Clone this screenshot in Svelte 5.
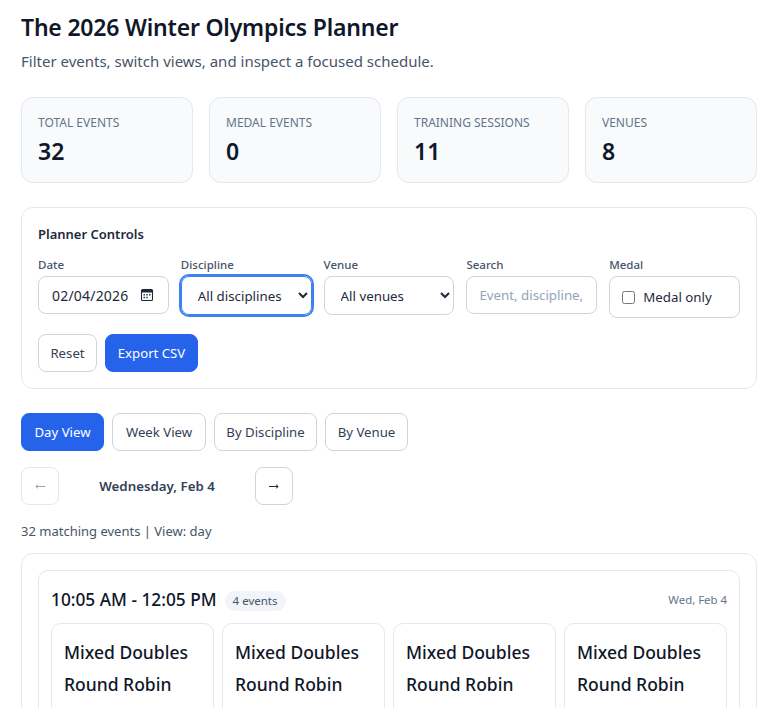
<script>
  const stats = [
    { label: "Total Events", value: 32 },
    { label: "Medal Events", value: 0 },
    { label: "Training Sessions", value: 11 },
    { label: "Venues", value: 8 },
  ];
  const views = ["Day View", "Week View", "By Discipline", "By Venue"];
  const cards = [1, 2, 3, 4];
</script>

<div class="page">
  <h1>The 2026 Winter Olympics Planner</h1>
  <p class="sub">Filter events, switch views, and inspect a focused schedule.</p>

  <div class="stats">
    {#each stats as stat}
      <div class="stat">
        <div class="stat-label">{stat.label}</div>
        <div class="stat-value">{stat.value}</div>
      </div>
    {/each}
  </div>

  <section class="controls">
    <h2>Planner Controls</h2>
    <div class="fields">
      <div class="field">
        <span class="label">Date</span>
        <div class="box date">
          <span>02/04/2026</span>
          <svg width="14" height="14" viewBox="0 0 14 14">
            <path d="M2.500 1.500h9A1 1 0 0 1 12.500 2.500v9a1 1 0 0 1-1 1h-9a1 1 0 0 1-1-1v-9a1 1 0 0 1 1-1z" fill="none" stroke="#1e293b" stroke-width="1.100"/>
            <path d="M1.500 2h11v2.500h-11z" fill="#1e293b"/>
            <path d="M3.500 6h1.400v1.400H3.500zM6.300 6h1.400v1.400H6.300zM9.100 6h1.400v1.400H9.100zM3.500 8.800h1.400v1.400H3.500zM6.300 8.800h1.400v1.400H6.300z" fill="#1e293b"/>
          </svg>
        </div>
      </div>
      <div class="field">
        <span class="label">Discipline</span>
        <select class="box select focused">
          <option>All disciplines</option>
        </select>
      </div>
      <div class="field">
        <span class="label">Venue</span>
        <select class="box select">
          <option>All venues</option>
        </select>
      </div>
      <div class="field">
        <span class="label">Search</span>
        <input class="box search" type="text" placeholder="Event, discipline, venue" />
      </div>
      <div class="field">
        <span class="label">Medal</span>
        <label class="box medal">
          <input type="checkbox" />
          <span>Medal only</span>
        </label>
      </div>
    </div>
    <div class="actions">
      <button class="btn">Reset</button>
      <button class="btn primary">Export CSV</button>
    </div>
  </section>

  <div class="tabs">
    {#each views as view, i}
      <button class="btn" class:primary={i === 0}>{view}</button>
    {/each}
  </div>

  <div class="nav">
    <button class="btn arrow" disabled aria-label="Previous day">
      <svg width="10" height="5" viewBox="0 0 10 5"><path d="M10 2.500H1M3 .7 .8 2.500 3 4.300" fill="none" stroke="currentColor"/></svg>
    </button>
    <div class="nav-label">Wednesday, Feb 4</div>
    <button class="btn arrow" aria-label="Next day">
      <svg width="10" height="5" viewBox="0 0 10 5"><path d="M0 2.500h9M7 .7 9.200 2.500 7 4.300" fill="none" stroke="currentColor"/></svg>
    </button>
  </div>

  <p class="summary">32 matching events | View: day</p>

  <section class="schedule">
    <div class="slot">
      <div class="slot-head">
        <div class="slot-title">
          <h3>10:05 AM - 12:05 PM</h3>
          <span class="pill">4 events</span>
        </div>
        <span class="slot-date">Wed, Feb 4</span>
      </div>
      <div class="cards">
        {#each cards as card}
          <div class="card">
            <div class="card-title">Mixed Doubles Round Robin</div>
          </div>
        {/each}
      </div>
    </div>
  </section>
</div>

<style>
  :global(body) {
    background: #fff;
    font-family: "Noto Sans", "Open Sans", sans-serif;
    color: #0f172a;
  }

  .page {
    padding: 0 17px 20px 21px;
  }

  h1 {
    margin: 0;
    padding-top: 12px;
    font-size: 23px;
    letter-spacing: -0.2px;
    line-height: 30px;
    font-weight: 600;
    color: #0f172a;
  }

  .sub {
    margin: 8px 0 0;
    font-size: 15px;
    line-height: 22px;
    color: #475569;
  }

  .stats {
    display: grid;
    grid-template-columns: repeat(4, 1fr);
    gap: 16px;
    margin-top: 25px;
  }

  .stat {
    height: 86px;
    box-sizing: border-box;
    padding: 16px;
    background: #f8fafc;
    border: 1px solid #e2e8f0;
    border-radius: 12px;
  }

  .stat-label {
    font-size: 12px;
    line-height: 18px;
    text-transform: uppercase;
    color: #64748b;
  }

  .stat-value {
    margin-top: 4px;
    font-size: 23px;
    line-height: 30px;
    font-weight: 600;
  }

  .controls {
    margin-top: 24px;
    padding: 16px;
    border: 1px solid #e2e8f0;
    border-radius: 12px;
  }

  h2 {
    margin: 0;
    font-size: 13px;
    line-height: 20px;
    font-weight: 600;
    color: #1e293b;
  }

  .fields {
    display: grid;
    grid-template-columns: repeat(5, 1fr);
    gap: 12px;
    margin-top: 13px;
  }

  .field {
    display: flex;
    flex-direction: column;
    gap: 3px;
    min-width: 0;
  }

  .label {
    font-size: 11.5px;
    line-height: 16px;
    font-weight: 500;
    color: #475569;
  }

  .box {
    box-sizing: border-box;
    width: 100%;
    border: 1px solid #cbd5e1;
    border-radius: 8px;
    background: #fff;
    font-family: inherit;
    font-size: 13.3px;
    color: #1e293b;
  }

  .date {
    height: 38px;
    display: flex;
    align-items: center;
    justify-content: space-between;
    padding: 0 14px 0 13px;
    font-size: 14px;
    letter-spacing: 0.2px;
  }

  .select {
    height: 39px;
    padding: 0 12px;
  }

  .focused {
    outline: 2px solid #3b82f6;
    outline-offset: 0;
    border-color: #3b82f6;
    border-radius: 8px;
  }

  .search {
    height: 38px;
    padding: 0 12px;
    outline: none;
  }

  .search::placeholder {
    color: #94a3b8;
  }

  .medal {
    height: 42px;
    display: flex;
    align-items: center;
    gap: 8px;
    padding: 0 12px;
  }

  .medal input {
    margin: 0;
    width: 13px;
    height: 13px;
  }

  .actions {
    display: grid;
    grid-template-columns: 59px 93px;
    gap: 8px;
    margin-top: 16px;
  }

  .btn {
    height: 38px;
    padding: 0;
    background: #fff;
    border: 1px solid #cbd5e1;
    border-radius: 8px;
    font-family: inherit;
    font-size: 13.2px;
    color: #334155;
  }

  .primary {
    background: #2563eb;
    border-color: #2563eb;
    color: #fff;
  }

  .tabs {
    display: grid;
    grid-template-columns: 83px 94px 103px 83px;
    gap: 8px;
    margin-top: 24px;
  }

  .nav {
    display: flex;
    align-items: center;
    gap: 8px;
    margin-top: 16px;
  }

  .arrow {
    display: flex;
    align-items: center;
    justify-content: center;
    width: 38px;
    color: #1e293b;
  }

  .arrow:disabled {
    border-color: #e2e8f0;
    color: #94a3b8;
  }

  .nav-label {
    width: 180px;
    text-align: center;
    font-size: 13.3px;
    font-weight: 600;
    color: #334155;
  }

  .summary {
    margin: 16px 0 0;
    font-size: 13px;
    line-height: 20px;
    color: #475569;
  }

  .schedule {
    margin-top: 12px;
    padding: 16px;
    border: 1px solid #e2e8f0;
    border-radius: 12px;
  }

  .slot {
    padding: 12px;
    border: 1px solid #e2e8f0;
    border-radius: 10px;
  }

  .slot-head {
    display: flex;
    align-items: center;
    justify-content: space-between;
    height: 28px;
    padding-top: 5px;
    margin-top: -2px;
    margin-bottom: -3px;
  }

  .slot-title {
    display: flex;
    align-items: center;
    gap: 8px;
  }

  h3 {
    margin: 0;
    font-size: 17.3px;
    line-height: 24px;
    font-weight: 500;
    color: #0f172a;
  }

  .pill {
    margin-top: 2px;
    padding: 2px 8px;
    border-radius: 999px;
    background: #f1f5f9;
    font-size: 11.5px;
    line-height: 16px;
    color: #475569;
  }

  .slot-date {
    margin-top: -2px;
    font-size: 11.4px;
    color: #64748b;
  }

  .cards {
    display: grid;
    grid-template-columns: repeat(4, 1fr);
    gap: 8px;
    margin-top: 12px;
  }

  .card {
    min-height: 120px;
    padding: 12px;
    border: 1px solid #e2e8f0;
    border-radius: 10px;
  }

  .card-title {
    font-size: 17.5px;
    line-height: 32px;
    font-weight: 500;
    color: #0f172a;
  }
</style>
